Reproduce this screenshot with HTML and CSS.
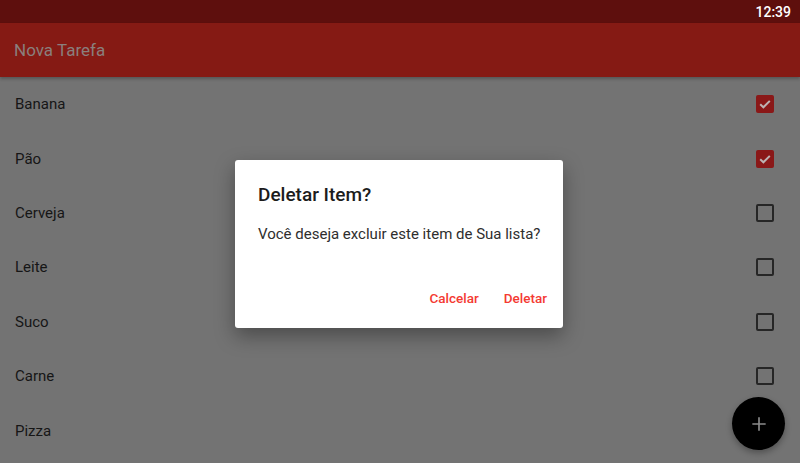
FILE: index.html
```html
<!DOCTYPE html>
<html lang="pt">
<head>
<meta charset="utf-8">
<link rel="stylesheet" href="styles.css">
</head>
<body>
<div class="screen">
  <div class="status"><span class="time">12:39</span></div>
  <header class="appbar"><span class="title">Nova Tarefa</span></header>
  <ul class="list">
    <li class="row"><span>Banana</span><span class="cb checked"><svg viewBox="0 0 18 18"><path d="M4.2 9.2l3.2 3.1 6.4-6.4" fill="none" stroke="#bdb3b3" stroke-width="2"/></svg></span></li>
    <li class="row"><span>Pão</span><span class="cb checked"><svg viewBox="0 0 18 18"><path d="M4.2 9.2l3.2 3.1 6.4-6.4" fill="none" stroke="#bdb3b3" stroke-width="2"/></svg></span></li>
    <li class="row"><span>Cerveja</span><span class="cb"></span></li>
    <li class="row"><span>Leite</span><span class="cb"></span></li>
    <li class="row"><span>Suco</span><span class="cb"></span></li>
    <li class="row"><span>Carne</span><span class="cb"></span></li>
    <li class="row"><span>Pizza</span><span class="cb"></span></li>
  </ul>
  <button class="fab"><svg viewBox="0 0 24 24" width="20" height="20"><path d="M12 4v16M4 12h16" stroke="#8a8a8a" stroke-width="2"/></svg></button>
  <div class="dialog">
    <h2 class="d-title">Deletar Item?</h2>
    <p class="d-body">Você deseja excluir este item de Sua lista?</p>
    <div class="d-actions">
      <button class="d-btn">Calcelar</button>
      <button class="d-btn">Deletar</button>
    </div>
  </div>
</div>
</body>
</html>
```
FILE: styles.css
```css
html, body {
  margin: 0;
  padding: 0;
}
body {
  font-family: Roboto, "Noto Sans", sans-serif;
  background: #737373;
}
.screen {
  position: relative;
  width: 800px;
  height: 463px;
  overflow: hidden;
  background: #737373;
}
.status {
  height: 23px;
  background: #5e0f0d;
  display: flex;
  justify-content: flex-end;
  align-items: center;
  padding-right: 9px;
}
.time {
  color: #ffffff;
  font-size: 14px;
  font-weight: 500;
}
.appbar {
  height: 54px;
  background: #851a14;
  display: flex;
  align-items: center;
  padding-left: 14px;
  box-shadow: 0 2px 3px rgba(0,0,0,0.25);
  position: relative;
}
.title {
  color: #8a7f7d;
  font-size: 17px;
}
.list {
  list-style: none;
  margin: 0;
  padding: 0;
}
.row {
  height: 54.4px;
  display: flex;
  align-items: center;
  justify-content: space-between;
  padding: 0 26px 0 15px;
  font-size: 15px;
  color: #161616;
}
.cb {
  width: 18px;
  height: 18px;
  box-sizing: border-box;
  border: 2px solid #262626;
  border-radius: 2px;
  display: block;
}
.cb.checked {
  background: #8a1818;
  border-color: #8a1818;
  border-width: 0;
}
.cb svg {
  display: block;
  width: 18px;
  height: 18px;
}
.fab {
  position: absolute;
  left: 732px;
  top: 397px;
  width: 53px;
  height: 53px;
  border-radius: 50%;
  border: none;
  background: #000;
  display: flex;
  align-items: center;
  justify-content: center;
  padding: 0;
  box-shadow: 0 3px 6px rgba(0,0,0,0.3);
}
.dialog {
  position: absolute;
  left: 235px;
  top: 160px;
  width: 328px;
  height: 168px;
  box-sizing: border-box;
  background: #fff;
  border-radius: 3px;
  box-shadow: 0 8px 20px rgba(0,0,0,0.35);
  padding: 22px 16px 0 23px;
  display: flex;
  flex-direction: column;
}
.d-title {
  margin: 0;
  font-size: 19px;
  font-weight: 500;
  color: #1c1c1c;
  line-height: 26px;
}
.d-body {
  margin: 16px 0 0;
  font-size: 15px;
  color: #2e2e2e;
  line-height: 20px;
  white-space: nowrap;
}
.d-actions {
  margin-top: 46px;
  display: flex;
  justify-content: flex-end;
  gap: 25px;
}
.d-btn {
  border: none;
  background: none;
  padding: 0;
  font-family: Roboto, sans-serif;
  font-size: 13.5px;
  font-weight: 500;
  color: #f43a32;
}
```
